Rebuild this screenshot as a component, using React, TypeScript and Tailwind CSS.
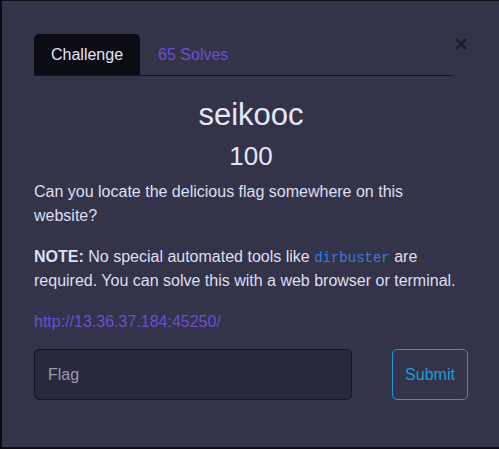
const App = () => {
  return (
    <div
      className="min-h-screen bg-[#0c0c12] pt-px pl-[2px] pb-[2px]"
      style={{ fontFamily: '"Liberation Sans", Arial, sans-serif' }}
    >
      <div className="h-[446px] bg-[#33334a] pl-[32px] pr-[31px] pt-[33px] text-[#dfdff2]">
        <div className="flex items-start">
          <div className="flex flex-1 border-b border-[#15151f]">
            <div className="h-[41px] rounded-t-[5px] bg-[#0c0c15] px-[17px] flex items-center text-[16px] text-[#e4e4f6]">
              Challenge
            </div>
            <div className="h-[41px] px-[18px] flex items-center text-[16px] text-[#6c4fd4]">
              65 Solves
            </div>
          </div>
          <button className="w-[14px] ml-px -mt-[2px] text-[24px] font-bold leading-none text-[#1c1c2a]">
            ×
          </button>
        </div>

        <h3 className="mt-[20px] text-center text-[31px] leading-[37px] text-[#e6e6f8]">
          seikooc
        </h3>
        <h4 className="mt-[8px] text-center text-[26px] leading-[31px] text-[#e6e6f8]">
          100
        </h4>

        <p className="mt-[8px] text-[16px] leading-[24px]">
          Can you locate the delicious flag somewhere on this website?
        </p>
        <p className="mt-[17px] text-[16px] leading-[24px]">
          <b>NOTE:</b> No special automated tools like{" "}
          <code
            className="text-[14px] leading-none text-[#3b7be0]"
            style={{ fontFamily: '"Liberation Mono", monospace' }}
          >
            dirbuster
          </code>{" "}
          are required. You can solve this with a web browser or terminal.
        </p>
        <p className="mt-[17px] text-[16px] leading-[24px]">
          <a href="#" className="text-[#6c4fd4]">
            http://13.36.37.184:45250/
          </a>
        </p>

        <form className="mt-[15px] flex justify-between">
          <input
            type="text"
            placeholder="Flag"
            className="w-[318px] h-[51px] rounded-[5px] border border-[#16161f] bg-[#29293e] px-[13px] text-[16px] text-[#dfdff2] placeholder:text-[#9a9aae] outline-none"
          />
          <button
            type="button"
            className="w-[76px] h-[51px] rounded-[5px] border border-[#1b9bd8] text-[16px] text-[#1b9bd8]"
          >
            Submit
          </button>
        </form>
      </div>
    </div>
  );
};

export default App;
